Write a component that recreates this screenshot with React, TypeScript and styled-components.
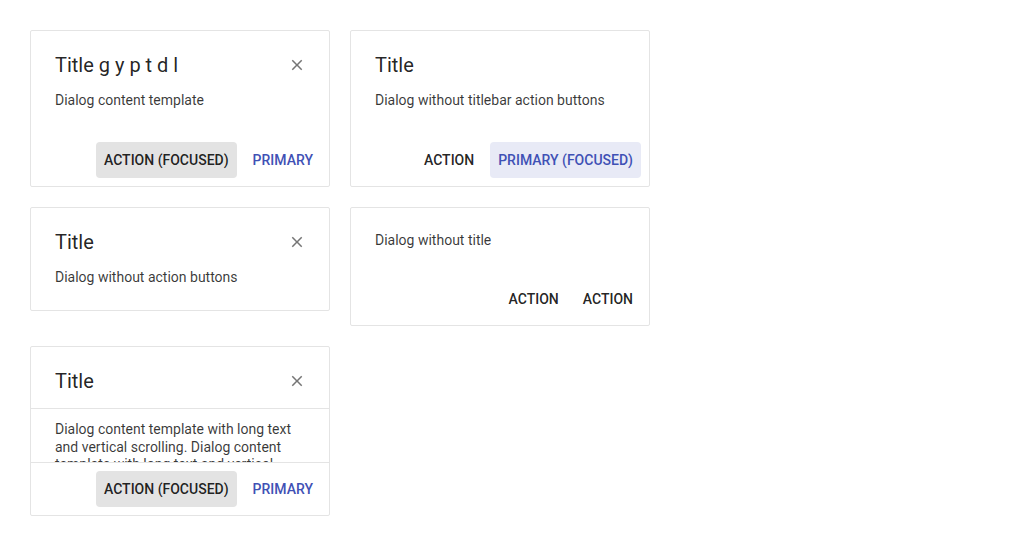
import React from "react";
import styled, { createGlobalStyle } from "styled-components";

const GlobalStyle = createGlobalStyle`
  html, body {
    margin: 0;
    padding: 0;
    background: #ffffff;
    font-family: Roboto, "Liberation Sans", Arial, sans-serif;
    -webkit-font-smoothing: antialiased;
  }
`;

const Page = styled.div`
  padding: 30px;
  width: 640px;
  display: flex;
  flex-wrap: wrap;
  align-items: flex-start;
  gap: 20px;
`;

const Card = styled.div<{ $height?: number }>`
  box-sizing: border-box;
  width: 300px;
  border: 1px solid #e4e4e4;
  border-radius: 2px;
  background: #fff;
  display: flex;
  flex-direction: column;
  height: ${({ $height }) => ($height ? `${$height}px` : "auto")};
`;

const TitleBar = styled.div<{ $divider?: boolean }>`
  display: flex;
  align-items: center;
  padding: 18px 0 ${({ $divider }) => ($divider ? "11px" : "0")} 24px;
  border-bottom: ${({ $divider }) => ($divider ? "1px solid #e4e4e4" : "none")};
`;

const Title = styled.h2`
  flex: 1;
  margin: 0;
  font-size: 20px;
  line-height: 32px;
  font-weight: 400;
  color: rgba(0, 0, 0, 0.87);
`;

const CloseButton = styled.button`
  width: 36px;
  height: 36px;
  margin: -2px 14px -2px 0;
  padding: 0;
  border: none;
  background: transparent;
  display: flex;
  align-items: center;
  justify-content: center;
  color: #757575;
  cursor: pointer;
`;

const Content = styled.div<{ $top: number; $bottom: number }>`
  padding: ${({ $top, $bottom }) => `${$top}px 24px ${$bottom}px`};
  font-size: 14px;
  line-height: 24px;
  color: rgba(0, 0, 0, 0.78);
`;

const ScrollContent = styled.div`
  flex: 1;
  min-height: 0;
  overflow: hidden;
  padding: 12px 24px 0;
  font-size: 14px;
  line-height: 17.5px;
  color: rgba(0, 0, 0, 0.78);
`;

const Actions = styled.div<{ $divider?: boolean; $top?: number }>`
  display: flex;
  justify-content: flex-end;
  gap: 8px;
  padding: ${({ $top }) => $top ?? 8}px 8px 8px;
  border-top: ${({ $divider }) => ($divider ? "1px solid #e4e4e4" : "none")};
`;

const Button = styled.button<{ $primary?: boolean; $focused?: boolean }>`
  height: 36px;
  padding: 0 8px;
  border: none;
  border-radius: 4px;
  font-family: Roboto, "Liberation Sans", Arial, sans-serif;
  font-size: 14px;
  font-weight: 500;
  text-transform: uppercase;
  cursor: pointer;
  color: ${({ $primary }) => ($primary ? "#3f51b5" : "rgba(0, 0, 0, 0.87)")};
  background: ${({ $primary, $focused }) =>
    !$focused ? "transparent" : $primary ? "#e8eaf6" : "#e3e3e3"};
`;

const CloseIcon = () => (
  <svg width="18" height="18" viewBox="0 0 24 24" fill="currentColor">
    <path d="M19 6.41 17.59 5 12 10.59 6.41 5 5 6.41 10.59 12 5 17.59 6.41 19 12 13.41 17.59 19 19 17.59 13.41 12z" />
  </svg>
);

const App = () => (
  <>
    <GlobalStyle />
    <Page>
      <Card>
        <TitleBar>
          <Title>Title g y p t d l</Title>
          <CloseButton aria-label="Close">
            <CloseIcon />
          </CloseButton>
        </TitleBar>
        <Content $top={7} $bottom={21}>Dialog content template</Content>
        <Actions $top={9}>
          <Button $focused>Action (focused)</Button>
          <Button $primary>Primary</Button>
        </Actions>
      </Card>

      <Card>
        <TitleBar>
          <Title>Title</Title>
        </TitleBar>
        <Content $top={7} $bottom={21}>Dialog without titlebar action buttons</Content>
        <Actions $top={9}>
          <Button>Action</Button>
          <Button $primary $focused>
            Primary (focused)
          </Button>
        </Actions>
      </Card>

      <Card>
        <TitleBar>
          <Title>Title</Title>
          <CloseButton aria-label="Close">
            <CloseIcon />
          </CloseButton>
        </TitleBar>
        <Content $top={7} $bottom={21}>Dialog without action buttons</Content>
      </Card>

      <Card>
        <Content $top={20} $bottom={20}>Dialog without title</Content>
        <Actions $top={9}>
          <Button>Action</Button>
          <Button>Action</Button>
        </Actions>
      </Card>

      <Card $height={170}>
        <TitleBar $divider>
          <Title>Title</Title>
          <CloseButton aria-label="Close">
            <CloseIcon />
          </CloseButton>
        </TitleBar>
        <ScrollContent>
          Dialog content template with long text and vertical scrolling. Dialog
          content template with long text and vertical scrolling. Dialog content
          template with long text and vertical scrolling.
        </ScrollContent>
        <Actions $divider>
          <Button $focused>Action (focused)</Button>
          <Button $primary>Primary</Button>
        </Actions>
      </Card>
    </Page>
  </>
);

export default App;
